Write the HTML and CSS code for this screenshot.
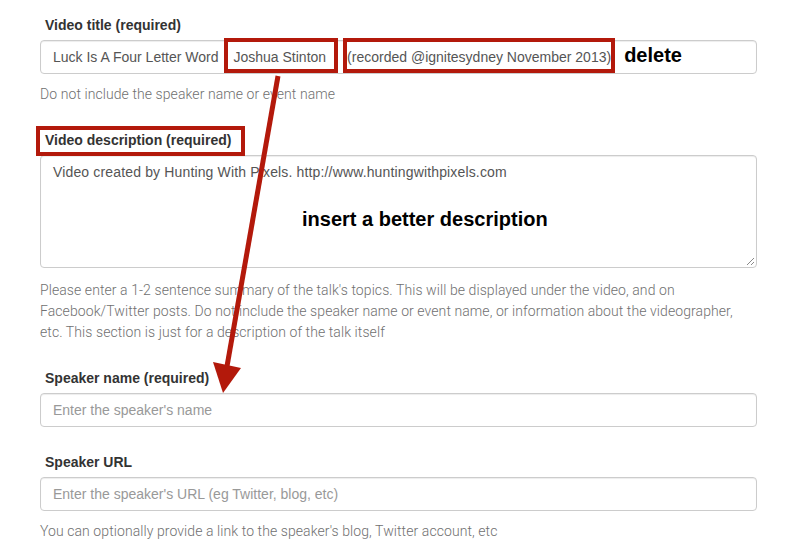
FILE: index.html
```html
<!DOCTYPE html>
<html lang="en">
<head>
<meta charset="utf-8">
<title>Video form</title>
<link rel="stylesheet" href="styles.css">
</head>
<body>
<div class="page">
  <div class="group">
    <div class="label">Video title (required)</div>
    <div class="field">
      <span>Luck Is A Four Letter Word</span>
      <span class="mark mark-name">Joshua Stinton</span>
      <span class="mark mark-event">(recorded @ignitesydney November 2013)</span>
      <span class="note note-delete">delete</span>
    </div>
    <p class="help">Do not include the speaker name or event name</p>
  </div>

  <div class="group">
    <div class="label marked">Video description (required)</div>
    <div class="field area">
      <div class="area-text">Video created by Hunting With Pixels. http://www.huntingwithpixels.com</div>
      <div class="note note-insert">insert a better description</div>
      <svg class="grip" width="8" height="8" viewBox="0 0 8 8"><path d="M8 1 L1 8 M8 5 L5 8" stroke="#8a8a8a" stroke-width="1" fill="none"/></svg>
    </div>
    <p class="help">Please enter a 1-2 sentence summary of the talk's topics. This will be displayed under the video, and on<br>Facebook/Twitter posts. Do not include the speaker name or event name, or information about the videographer,<br>etc. This section is just for a description of the talk itself</p>
  </div>

  <div class="group">
    <div class="label">Speaker name (required)</div>
    <input class="field" type="text" placeholder="Enter the speaker's name">
  </div>

  <div class="group">
    <div class="label">Speaker URL</div>
    <input class="field" type="text" placeholder="Enter the speaker's URL (eg Twitter, blog, etc)">
    <p class="help">You can optionally provide a link to the speaker's blog, Twitter account, etc</p>
  </div>

  <svg class="arrow" width="805" height="559" viewBox="0 0 805 559">
    <line x1="278" y1="76" x2="226" y2="372" stroke="#b3190b" stroke-width="5"/>
    <polygon points="213,362 241,368 223,393" fill="#b3190b"/>
  </svg>
</div>
</body>
</html>
```

FILE: styles.css
```css
* { box-sizing: border-box; }

body {
  margin: 0;
  background: #fff;
  font-family: "Liberation Sans", Arial, sans-serif;
  font-size: 14px;
  color: #333;
}

.page {
  position: relative;
  width: 805px;
  height: 559px;
  padding: 15px 48px 0 40px;
  overflow: hidden;
}

.group { margin-bottom: 25px; }

.label {
  display: block;
  padding-left: 5px;
  margin-bottom: 5px;
  font-weight: bold;
  line-height: 20px;
  color: #333;
}

.label.marked {
  width: fit-content;
  border: 4px solid #b3190b;
  padding: 0 10px 2px 5px;
  margin: -4px 0 -1px -4px;
  position: relative;
  z-index: 1;
}

.field {
  display: flex;
  align-items: center;
  width: 100%;
  height: 34px;
  border: 1px solid #ccc;
  border-radius: 4px;
  padding: 0 12px;
  color: #555;
  font-family: inherit;
  font-size: 14px;
  line-height: 20px;
  background: #fff;
  box-shadow: inset 0 1px 1px rgba(0,0,0,0.075);
  outline: none;
}

.field::placeholder { color: #999; opacity: 1; }

.mark {
  border: 4px solid #b3190b;
  padding: 5px 8px 2px 5px;
  margin-bottom: 3px;
}

.mark-name { margin-left: 6px; }

.mark-event {
  margin-left: 5px;
  padding-left: 0;
  padding-right: 0;
}

.note {
  font-weight: bold;
  color: #000;
  font-size: 20px;
}

.note-delete {
  margin-left: 9px;
  margin-bottom: 4px;
}

.area {
  display: block;
  position: relative;
  height: 113px;
  padding: 6px 12px;
}

.area-text { letter-spacing: 0.15px; }

.note-insert {
  margin: 26px 0 0 249px;
  line-height: 22px;
}

.grip {
  position: absolute;
  right: 2px;
  bottom: 2px;
}

.help {
  margin: 10px 0 0;
  line-height: 21px;
  color: #707070;
  font-family: Roboto, "Liberation Sans", sans-serif;
  font-weight: 300;
  letter-spacing: 0.08px;
}

.area + .help { margin-top: 12px; }

.arrow {
  position: absolute;
  left: 0;
  top: 0;
  pointer-events: none;
}
```
